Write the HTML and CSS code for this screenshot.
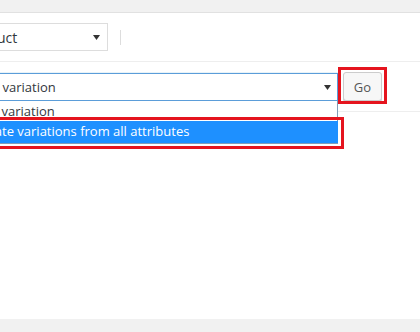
FILE: index.html
```html
<!DOCTYPE html>
<html lang="en">
<head>
    <meta charset="UTF-8">
    <meta name="viewport" content="width=device-width, initial-scale=1.0">
    <title>Product data - Variations</title>
    <link rel="stylesheet" href="styles.css">
</head>
<body>
    <div class="top-band"></div>

    <div class="panel">
        <div class="toolbar">
            <div class="select select-type">
                <span>Variable product</span>
                <svg class="caret" width="7" height="5" viewBox="0 0 7 5"><path d="M0 0h7L3.5 5z"/></svg>
            </div>
            <span class="vsep"></span>
        </div>

        <div class="actions">
            <div class="combo">
                <div class="select select-var">
                    <span>Add variation</span>
                    <svg class="caret" width="7" height="5" viewBox="0 0 7 5"><path d="M0 0h7L3.5 5z"/></svg>
                </div>
                <ul class="dropdown">
                    <li>Add variation</li>
                    <li class="hl">Create variations from all attributes<span class="mark mark-opt"></span></li>
                </ul>
            </div>
            <span class="go-wrap">
                <button class="btn-go">Go</button>
                <span class="mark mark-go"></span>
            </span>
        </div>

        <div class="panel-body"></div>
    </div>
</body>
</html>
```

FILE: styles.css
```css
* { margin: 0; padding: 0; box-sizing: border-box; }
body { background: #f1f1f1; font-family: 'Open Sans', 'Noto Sans', sans-serif; font-size: 13px; color: #32373c; overflow: hidden; }

.top-band { height: 13px; border-bottom: 1px solid #e2e2e2; }

.panel { background: #fff; height: 306px; box-shadow: 0 1px 2px rgba(0, 0, 0, 0.08); }

.select {
    display: flex; align-items: center; justify-content: space-between;
    background: #fff; border: 1px solid #ddd; white-space: nowrap;
}
.caret { fill: #333; flex-shrink: 0; }

/* product type row */
.toolbar {
    display: flex; align-items: center; gap: 12px;
    padding: 10px 0; margin-left: -100px; border-bottom: 1px solid #eee;
}
.select-type { width: 208px; height: 28px; padding: 0 7px 0 8px; font-size: 14px; }
.vsep { width: 1px; height: 15px; background: #ddd; }

/* bulk actions row */
.actions {
    display: flex; align-items: flex-start; gap: 5px;
    padding: 10px 0 10px 0; margin-left: -40px; border-bottom: 1px solid #eee;
}
.combo { position: relative; width: 378px; margin-top: 1px; }
.select-var { height: 28px; padding: 0 6px 0 14px; border-color: #5b9dd9; box-shadow: 0 0 1px rgba(30, 140, 190, 0.6); }

.dropdown {
    position: absolute; left: 0; right: 0; top: 28px; z-index: 5;
    list-style: none; background: #fff;
    border: 1px solid #7f9db9; border-top: none;
}
.dropdown li { height: 20px; line-height: 20px; padding-left: 13px; white-space: nowrap; position: relative; }
.dropdown li.hl { height: 22px; line-height: 21px; background: #1e90ff; color: #fff; margin-right: -1px; }

.go-wrap { position: relative; display: block; }
.btn-go {
    display: block; width: 39px; height: 29px; font: inherit; color: #555;
    background: #f7f7f7; border: 1px solid #ccc; border-radius: 3px;
    box-shadow: 0 1px 0 #ccc;
}

/* red annotation boxes */
.mark { position: absolute; border: 3px solid #e5141e; pointer-events: none; }
.mark-go { top: -5px; left: -5px; right: -5px; bottom: -3px; }
.mark-opt { top: -4px; left: -60px; right: -6px; bottom: -6px; }

.panel-body { height: 193px; }
```
